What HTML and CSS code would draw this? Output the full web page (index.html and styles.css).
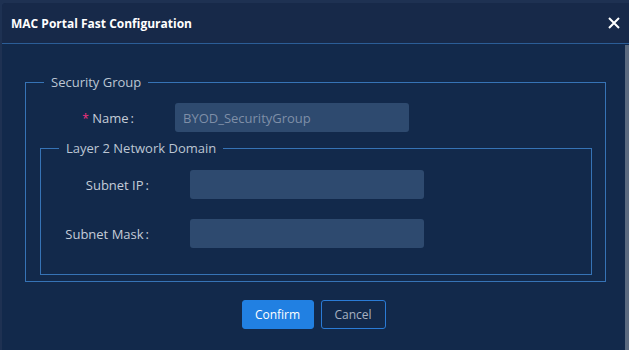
FILE: index.html
```html
<!DOCTYPE html>
<html lang="en">
<head>
    <meta charset="UTF-8">
    <title>MAC Portal Fast Configuration</title>
    <link rel="stylesheet" href="styles.css">
</head>
<body>
    <div class="dialog">
        <div class="dialog-header">
            <span class="dialog-title">MAC Portal Fast Configuration</span>
            <button class="close-btn" aria-label="Close">
                <svg width="12" height="12" viewBox="0 0 12 12">
                    <path d="M1 1 L11 11 M11 1 L1 11" stroke="#ffffff" stroke-width="2" fill="none"/>
                </svg>
            </button>
        </div>

        <div class="dialog-body">
            <div class="dialog-content">
                <fieldset class="group">
                    <legend>Security Group</legend>
                    <div class="form-row">
                        <label class="form-label"><span class="required">*</span> Name<span class="colon">:</span></label>
                        <input class="form-input" type="text" placeholder="BYOD_SecurityGroup" disabled>
                    </div>

                    <fieldset class="group inner">
                        <legend>Layer 2 Network Domain</legend>
                        <div class="form-row">
                            <label class="form-label">Subnet IP<span class="colon">:</span></label>
                            <input class="form-input" type="text">
                        </div>
                        <div class="form-row">
                            <label class="form-label">Subnet Mask<span class="colon">:</span></label>
                            <input class="form-input" type="text">
                        </div>
                    </fieldset>
                </fieldset>

                <div class="dialog-footer">
                    <button class="btn btn-primary">Confirm</button>
                    <button class="btn btn-default">Cancel</button>
                </div>
            </div>
            <div class="scrollbar"></div>
        </div>
    </div>
</body>
</html>
```

FILE: styles.css
```css
body {
    margin: 0;
    padding: 0;
    height: 100vh;
    overflow: hidden;
    background-color: #1e3152;
    font-family: 'Segoe UI', 'Open Sans', 'Noto Sans', sans-serif;
}

.dialog {
    margin: 3px 0 0 2px;
    width: 627px;
    border-radius: 4px 0 0 0;
    overflow: hidden;
    background-color: #12294b;
}

.dialog-header {
    height: 40px;
    padding: 0 8px 0 9px;
    display: flex;
    align-items: center;
    justify-content: space-between;
    background-color: #172949;
    border-bottom: 1px solid #2b5d97;
}

.dialog-title {
    color: #ffffff;
    font-size: 12px;
    font-weight: bold;
}

.close-btn {
    background: none;
    border: none;
    padding: 0;
    margin-right: 1px;
    display: flex;
    cursor: pointer;
}

.dialog-body {
    display: flex;
    height: 306px;
}

.dialog-content {
    flex: 1;
    padding: 30px 19px 0 23px;
}

.scrollbar {
    width: 4px;
    margin-top: 1px;
    background-color: #5b6a80;
}

.group {
    margin: 0;
    padding: 13px 0 6px 0;
    border: 1px solid #3673b6;
    min-width: 0;
}

.group legend {
    margin-left: 18px;
    padding: 0 7px;
    color: #bcc6d3;
    font-size: 13px;
    line-height: 16px;
}

.group.inner {
    margin: 8px 13px 0 14px;
    padding: 14px 0 26px 0;
    display: flex;
    flex-direction: column;
    gap: 20px;
}

.form-row {
    display: flex;
    align-items: center;
}

.form-label {
    width: 108px;
    margin-right: 41px;
    text-align: right;
    color: #c4ccd8;
    font-size: 13px;
    white-space: nowrap;
}

.colon {
    margin-left: 2px;
}

.required {
    color: #f5317f;
    font-size: 12px;
}

.form-input {
    width: 234px;
    height: 29px;
    box-sizing: border-box;
    padding: 0 8px;
    border: none;
    border-radius: 3px;
    background-color: #2e4a6f;
    color: #c4ccd8;
    font-family: inherit;
    font-size: 13px;
    outline: none;
}

.form-input::placeholder {
    color: #7f8fa8;
}

.dialog-footer {
    display: flex;
    justify-content: center;
    gap: 7px;
    margin: 18px -19px 0 -23px;
}

.btn {
    height: 29px;
    border-radius: 3px;
    font-family: inherit;
    font-size: 12px;
    cursor: pointer;
}

.btn-primary {
    width: 72px;
    background-color: #2180e2;
    border: 1px solid #2180e2;
    color: #ffffff;
}

.btn-default {
    width: 65px;
    background-color: transparent;
    border: 1px solid #2a7bd6;
    color: #a7b2c2;
}
```
